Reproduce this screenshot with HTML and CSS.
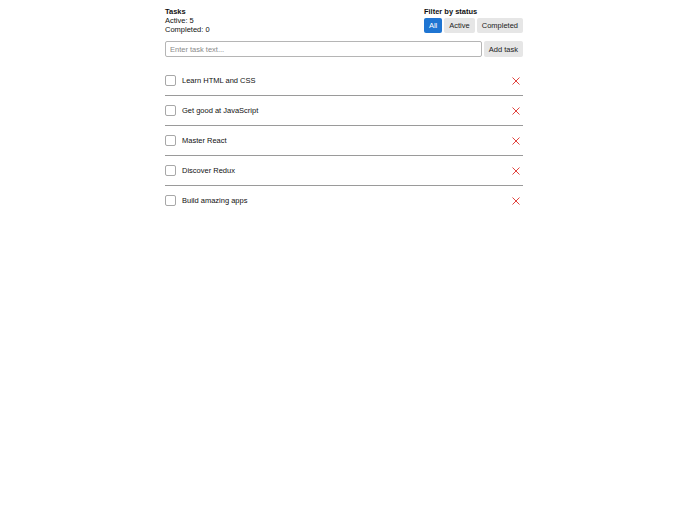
FILE: index.html
```html
<!DOCTYPE html>
<html>
<head>
<meta charset="utf-8">
<link rel="stylesheet" href="styles.css">
</head>
<body>
<div class="app">
  <div class="header">
    <div class="stats">
      <div class="title">Tasks</div>
      <div>Active: 5</div>
      <div>Completed: 0</div>
    </div>
    <div class="filter">
      <div class="title">Filter by status</div>
      <div class="btns">
        <button class="btn active">All</button>
        <button class="btn">Active</button>
        <button class="btn">Completed</button>
      </div>
    </div>
  </div>
  <div class="add">
    <input class="input" type="text" placeholder="Enter task text...">
    <button class="btn addbtn">Add task</button>
  </div>
  <ul class="list">
    <li class="item"><span class="check"></span><span class="text">Learn HTML and CSS</span><span class="del"><svg width="8" height="8" viewBox="0 0 8 8"><path d="M0.5 0.5L7.5 7.5M7.5 0.5L0.5 7.5" stroke="#e0443e" stroke-width="1"/></svg></span></li>
    <li class="item"><span class="check"></span><span class="text">Get good at JavaScript</span><span class="del"><svg width="8" height="8" viewBox="0 0 8 8"><path d="M0.5 0.5L7.5 7.5M7.5 0.5L0.5 7.5" stroke="#e0443e" stroke-width="1"/></svg></span></li>
    <li class="item"><span class="check"></span><span class="text">Master React</span><span class="del"><svg width="8" height="8" viewBox="0 0 8 8"><path d="M0.5 0.5L7.5 7.5M7.5 0.5L0.5 7.5" stroke="#e0443e" stroke-width="1"/></svg></span></li>
    <li class="item"><span class="check"></span><span class="text">Discover Redux</span><span class="del"><svg width="8" height="8" viewBox="0 0 8 8"><path d="M0.5 0.5L7.5 7.5M7.5 0.5L0.5 7.5" stroke="#e0443e" stroke-width="1"/></svg></span></li>
    <li class="item"><span class="check"></span><span class="text">Build amazing apps</span><span class="del"><svg width="8" height="8" viewBox="0 0 8 8"><path d="M0.5 0.5L7.5 7.5M7.5 0.5L0.5 7.5" stroke="#e0443e" stroke-width="1"/></svg></span></li>
  </ul>
</div>
</body>
</html>
```
FILE: styles.css
```css
html, body {
  margin: 0;
  padding: 0;
  background: #fff;
}
body {
  font-family: "Liberation Sans", Arial, sans-serif;
  font-size: 7.5px;
  line-height: 9px;
  color: #111;
}
.app {
  width: 358px;
  margin: 0 auto;
  padding-top: 7px;
}
.header {
  display: flex;
  justify-content: space-between;
}
.title {
  font-weight: bold;
}
.filter .btns {
  display: flex;
  gap: 2px;
  margin-top: 2px;
}
.btn {
  font-family: inherit;
  font-size: 7.5px;
  line-height: 9px;
  height: 15px;
  padding: 0 5px;
  border: none;
  border-radius: 2px;
  background: #e6e6e6;
  color: #222;
  margin: 0;
}
.btn.active {
  background: #1f75d2;
  color: #fff;
}
.add {
  display: flex;
  gap: 2px;
  margin-top: 7px;
}
.input {
  flex: 1;
  height: 16px;
  box-sizing: border-box;
  border: 1px solid #b5b5b5;
  border-radius: 2px;
  padding: 0 4px;
  font-family: inherit;
  font-size: 7.5px;
  margin: 0;
}
.input::placeholder {
  color: #8a8a8a;
}
.addbtn {
  height: 16px;
}
.list {
  list-style: none;
  margin: 9px 0 0;
  padding: 0;
}
.item {
  display: flex;
  align-items: center;
  height: 29px;
  border-bottom: 1px solid #9a9a9a;
}
.item:last-child {
  border-bottom: none;
}
.check {
  width: 9px;
  height: 9px;
  border: 1px solid #a8a8a8;
  border-radius: 2px;
  margin-right: 6px;
  background: #fff;
}
.text {
  flex: 1;
}
.del {
  display: flex;
  margin-right: 3px;
}
```
